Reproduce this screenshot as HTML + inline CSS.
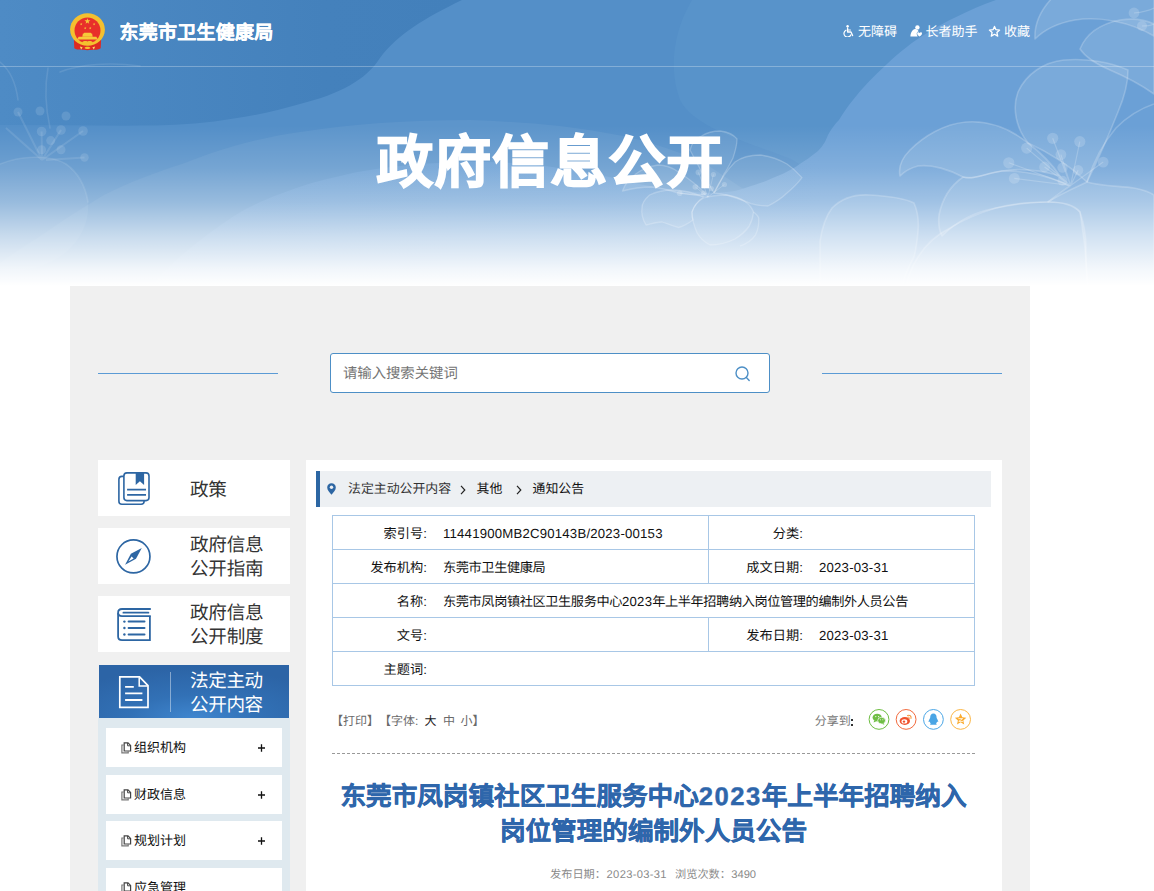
<!DOCTYPE html>
<html lang="zh-CN">
<head>
<meta charset="utf-8">
<title>东莞市卫生健康局 政府信息公开</title>
<style>
*{margin:0;padding:0;box-sizing:border-box;}
html,body{width:1154px;height:891px;overflow:hidden;background:#fff;}
body{font-family:"Liberation Sans",sans-serif;color:#000;position:relative;text-rendering:geometricPrecision;}
.abs{position:absolute;}
.nw{white-space:nowrap;}

/* ===== banner ===== */
#banner{position:absolute;left:0;top:0;width:1154px;height:286px;overflow:hidden;background:#5490c8;}
#banner svg{position:absolute;left:0;top:0;}
#hline{position:absolute;left:0;top:66px;width:1154px;height:1px;background:rgba(255,255,255,.28);}
#logo{position:absolute;left:70px;top:12.5px;width:35px;height:38px;}
#site{position:absolute;left:119.5px;top:21px;letter-spacing:0.25px;-webkit-text-stroke:0.3px #fff;font-size:19px;line-height:26px;font-weight:bold;color:#fff;}
.tl{position:absolute;top:22.5px;font-size:13px;line-height:18px;color:#fff;}
#big{position:absolute;left:2px;width:1097px;top:124px;text-align:center;font-size:56.5px;line-height:78px;font-weight:bold;color:#fff;letter-spacing:1.5px;-webkit-text-stroke:1.7px #fff;}

/* ===== grey container ===== */
#wrap{position:absolute;left:70px;top:286px;width:960px;height:605px;background:#f0f0f0;}
.sline{position:absolute;top:373px;height:1px;background:#5b9bd5;}
#search{position:absolute;left:330px;top:353px;width:440px;height:40px;background:#fff;border:1px solid #4d8fc6;border-radius:3px;}
#search span{position:absolute;left:12px;top:10.5px;font-size:14.4px;line-height:18px;color:#757575;letter-spacing:-0.05px;}
#search svg{position:absolute;left:403px;top:11px;}

/* ===== sidebar ===== */
.nav{position:absolute;left:98px;width:192px;height:56px;background:#fff;}
.nav .t{position:absolute;left:92px;font-size:18.6px;line-height:24.2px;color:#333;letter-spacing:-0.25px;}
.nav svg{position:absolute;}
#navon{position:absolute;left:98.5px;top:664.5px;width:190px;height:53.5px;background:radial-gradient(ellipse 75% 95% at 50% 100%,#3f86cf 0%,#3271b6 45%,#2c64a6 100%);}
#navon .t{position:absolute;left:91.5px;top:4px;font-size:18.6px;line-height:24.8px;color:#fff;letter-spacing:-0.4px;}
#subbg{position:absolute;left:98px;top:718px;width:192px;height:173px;background:#dfe9ef;}
.sub{position:absolute;left:106px;width:176px;height:39px;background:#fff;}
.sub .t{position:absolute;left:28px;top:11.2px;font-size:13px;line-height:18px;color:#111;}
.sub .p{position:absolute;left:152px;top:16px;width:7px;height:7px;}
.sub svg{position:absolute;left:15px;top:14px;}

/* ===== content ===== */
#main{position:absolute;left:306px;top:460px;width:696px;height:431px;background:#fff;}
#crumb{position:absolute;left:316px;top:471px;width:675px;height:36px;background:#edf0f3;border-left:4px solid #2c66a3;}
#crumb span{position:absolute;top:9px;font-size:12.9px;line-height:18px;color:#111;}
#crumb svg{position:absolute;}
#tbl{position:absolute;left:332px;top:514.5px;width:643px;height:171.7px;border:1px solid #a8c7e6;}
#tbl .h{position:absolute;left:0;width:641px;height:1px;background:#a8c7e6;}
#tbl .v{position:absolute;top:0;width:1px;background:#a8c7e6;}
.lab{position:absolute;font-size:13.2px;line-height:18px;color:#111;text-align:right;letter-spacing:0.05px;}
.val{position:absolute;font-size:13.2px;line-height:18px;color:#111;letter-spacing:-0.4px;}
.ls{letter-spacing:0.2px;}
.tool{position:absolute;top:712px;font-size:12px;line-height:18px;color:#6a6a6a;text-spacing-trim:space-all;}
#dash{position:absolute;left:332px;top:753px;width:643px;height:0;border-top:1px dashed #999;}
#title{position:absolute;left:322px;top:780px;width:663px;text-align:center;font-size:25.6px;line-height:34.5px;font-weight:bold;color:#2e66ab;-webkit-text-stroke:0.45px #2e66ab;}
.meta{position:absolute;top:865.5px;font-size:11.2px;line-height:18px;color:#8a8a8a;text-spacing-trim:space-all;}
</style>
</head>
<body>

<!-- BANNER -->
<div id="banner">
<svg width="1154" height="286" viewBox="0 0 1154 286">
<defs>
<linearGradient id="fade" x1="0" y1="0" x2="0" y2="1">
<stop offset="0" stop-color="#fff" stop-opacity="0"/>
<stop offset="0.44" stop-color="#fff" stop-opacity="0"/>
<stop offset="0.587" stop-color="#fff" stop-opacity="0.15"/>
<stop offset="0.706" stop-color="#fff" stop-opacity="0.36"/>
<stop offset="0.825" stop-color="#fff" stop-opacity="0.66"/>
<stop offset="0.94" stop-color="#fff" stop-opacity="0.91"/>
<stop offset="1" stop-color="#fff" stop-opacity="1"/>
</linearGradient>
<linearGradient id="lz" gradientUnits="userSpaceOnUse" x1="150" y1="0" x2="820" y2="0"><stop offset="0" stop-color="#6ba0d6" stop-opacity="0.5"/><stop offset="1" stop-color="#6ba0d6" stop-opacity="1"/></linearGradient>
<linearGradient id="dk" x1="0" y1="0" x2="1" y2="0">
<stop offset="0" stop-color="#4e8bc5"/>
<stop offset="0.7" stop-color="#4481bc"/>
<stop offset="1" stop-color="#4380bb"/>
</linearGradient>
</defs>
<rect width="1154" height="286" fill="#548fc8"/>
<!-- darker wave top-left -->
<path d="M0,0 H462 C425,18 398,34 380,58 C366,80 340,94 300,104 C280,110 258,115 234,118.5 C208,123 182,125 156,125.5 C104,126 52,125 0,125 Z" fill="url(#dk)"/>
<!-- medium zone -->
<path d="M692,0 C674,30 668,68 680,100 C694,128 748,142 791,159 L860,200 L1154,200 L1154,0 Z" fill="#5893ca"/>
<!-- lighter waves lower-left -->
<path d="M0,263 C12,254 26,245 39,237 C60,222 82,208 104,195 C130,182 156,172 182,164 C200,157 216,151 234,146 C256,140 278,135 300,132 C326,128 352,125 380,123 C410,121 440,120 470,120 C500,121 530,123 560,126 C590,130 616,134 640,140 C664,147 684,154 700,160 L760,200 L760,286 L0,286 Z" fill="#fff" fill-opacity="0.055"/>
<!-- light zone right -->
<path d="M996,0 H1154 V286 H150 C152,284 154,282 156,281 C164,272 172,263 182,255 C198,241 216,228 234,216 C250,206 266,199 280,194 C300,186 320,180 340,176 C360,171 380,168 400,166 C426,163 452,162 480,162 C506,162 534,164 559,168 C588,172 614,178 639,184 C654,187 668,189 679,190 C692,192 704,193 714,193 C724,192 730,192 735,191 C748,187 758,184 766,181 C780,175 790,171 797,166 C806,160 812,156 818,151 C824,145 826,140 828,135 C832,128 835,124 839,120 C844,112 848,106 853,100 C862,88 874,76 887,64 C900,52 912,42 927,33 C945,22 968,10 996,0 Z" fill="url(#lz)"/>
<!-- flowers right -->
<g fill="#fff" fill-opacity="0.105" stroke="#fff" stroke-opacity="0.2" stroke-width="1.6" stroke-linejoin="round">
<path d="M1035,39 C1034,22 1042,8 1054,-4 L1154,-4 L1154,36 C1130,22 1100,16 1075,20 C1058,23 1044,30 1035,39 Z"/>
<path d="M1080,49 C1086,34 1100,24 1120,20 C1134,18 1146,20 1154,24 L1154,94 C1140,84 1124,76 1110,70 C1096,64 1086,58 1080,49 Z"/>
<path d="M1028,143 C1016,128 1012,108 1018,92 C1026,74 1044,62 1064,60 C1086,58 1110,62 1128,70 C1128,84 1124,98 1118,112 C1110,132 1100,156 1087,182 C1070,166 1048,152 1028,143 Z"/>
<path d="M900,176 C898,166 902,158 910,150 C924,136 944,124 966,122 C990,120 1012,130 1028,143 C1040,152 1052,164 1060,176 C1040,170 1020,168 1002,171 C984,174 974,180 963,177 C950,170 932,164 918,166 C910,168 904,172 900,176 Z"/>
<path d="M963,177 C950,186 942,200 939,215 C938,224 940,232 942,236 C956,222 974,212 996,208 C1016,204 1034,202 1048,202 C1056,196 1064,190 1070,186 C1050,176 1024,170 1002,171 C986,173 974,180 963,177 Z"/>
<path d="M918,257 C926,244 938,234 950,228 C966,218 982,212 996,208 C1014,203 1032,202 1048,202 C1062,202 1074,206 1080,212 C1084,224 1086,236 1086,248 C1086,262 1086,276 1088,286 L906,286 C908,276 912,266 918,257 Z"/>
<path d="M820,241 C822,228 826,216 832,208 C842,198 856,194 870,195 C888,196 904,198 914,203 C918,212 919,222 918,232 C917,242 916,250 914,257 C908,268 904,278 903,286 L820,286 Z"/>
<path d="M1087,182 C1100,186 1120,186 1134,188 C1144,190 1150,192 1154,195 L1154,286 L1088,286 C1086,270 1086,254 1084,240 C1082,226 1080,212 1080,212 C1074,204 1062,202 1048,202 C1060,194 1074,188 1087,182 Z"/>
<path d="M1087,182 C1094,160 1104,142 1116,128 C1128,116 1142,108 1154,104" fill="none"/>
</g>
<g stroke="#fff" stroke-opacity="0.2" stroke-width="1.2" fill="none">
<path d="M1070.6,185.5 L1052.7,138.3 M1070.6,185.5 L1079.8,141.6 M1070.6,185.5 L1026.7,148.1 M1070.6,185.5 L1060.9,154.6 M1070.6,185.5 L1008.8,162.8 M1070.6,185.5 L1044.6,167 M1070.6,185.5 L1078.1,170.2 M1070.6,185.5 L1103.2,162.1 M1070.6,185.5 L1014.3,178.4 M1134,13 C1144,12 1150,10 1154,8 M1142,26 C1148,26 1152,25 1154,24"/>
</g>
<g fill="#fff" fill-opacity="0.17">
<circle cx="1052.7" cy="138.3" r="5.6"/><circle cx="1079.8" cy="141.6" r="5.6"/><circle cx="1026.7" cy="148.1" r="5.6"/><circle cx="1060.9" cy="154.6" r="5.4"/><circle cx="1008.8" cy="162.8" r="5.6"/><circle cx="1044.6" cy="167" r="5.4"/><circle cx="1062.5" cy="167.6" r="5.2"/><circle cx="1078.1" cy="170.2" r="5.2"/><circle cx="1103.2" cy="162.1" r="5.4"/><circle cx="1014.3" cy="178.4" r="5.4"/><circle cx="1062.5" cy="180.7" r="5"/><circle cx="1134" cy="13" r="5.4"/><circle cx="1142" cy="26" r="5"/>
</g>
<!-- small flower mid -->
<g fill="#fff" fill-opacity="0.085" stroke="#fff" stroke-opacity="0.22" stroke-width="1.3" stroke-linejoin="round">
<path d="M690,150 C692,142 696,138 701.5,136 C708,132 714,131 720,131 C728,132 734,135 737,139 C737,146 735,152 733,158 C730,164 727,170 724,174 C721,181 717,188 714,193 C706,180 698,166 690,150 Z"/>
<path d="M714,193 C720,180 727,170 735,162 C742,157 751,155 760,155 C770,156 780,160 787,164 C793,168 798,173 802,177.6 C798,183 793,188 787,193 C781,199 774,203 768,206 C762,206 756,205 751,203.6 C742,200 734,197 726.5,195 C722,194 718,193.5 714,193 Z"/>
<path d="M622.5,191 C625,184 630,178 635,174.5 C642,169 650,166 658,165 C666,165 673,168 678.6,172 C688,178 698,186 706,194 C698,196 688,194 678.6,193 C668,190 660,188 651.6,187 C640,187 630,189 622.5,191 Z"/>
<path d="M703.6,197 C692,192 682,190 672,190 C664,190 656,192 649.5,195 C645,199 642,203 642,207.8 C641,214 643,220 646,225 C651,224 657,222 662,222 C668,224 673,226 678.6,227.5 C684,226 689,223 693,220 C692,217 692,214 692,212 C694,206 698,201 703.6,197 Z"/>
<path d="M692,212 C694,205 698,201 703.6,198 C710,196 718,195 726.5,195 C734,196 740,198 745,201.5 C749,204 752,208 753.5,212 C753,218 751,223 749,226.5 C745,232 740,236 735,239 C727,243 718,245 710,245 C704,242 700,238 697,232.7 C694,226 692,219 692,212 Z"/>
<path d="M753.5,212 C756,214 758,216 758.7,218 C759,224 758,230 755.6,234.8 C752,240 746,244 740,246" fill="none"/>
</g>
<g fill="#fff" fill-opacity="0.2">
<circle cx="698.4" cy="172.4" r="2.8"/><circle cx="713.4" cy="174.5" r="2.6"/><circle cx="724.4" cy="184.5" r="2.6"/><circle cx="695.3" cy="187" r="2.8"/><circle cx="711.3" cy="188.6" r="2.6"/><circle cx="679.7" cy="193.2" r="2.8"/><circle cx="703.6" cy="193.2" r="2.6"/>
</g>
<g stroke="#fff" stroke-opacity="0.2" stroke-width="1" fill="none"><path d="M708,197 L698.4,172.4 M708,197 L713.4,174.5 M708,197 L724.4,184.5 M708,197 L695.3,187 M708,197 L679.7,193.2"/></g>
<!-- faint flower left -->
<g fill="none" stroke="#fff" stroke-opacity="0.10" stroke-width="1.6" stroke-linecap="round">
<path d="M0,164 C20,156 50,154 66,164 C80,174 86,190 88,202"/>
<path d="M48,68 C44,90 46,110 50,128"/>
<path d="M0,62 C10,70 16,84 18,100"/>
<path d="M60,72 C80,64 110,62 140,66"/>
</g>
<g fill="none" stroke="#fff" stroke-opacity="0.10" stroke-width="2">
<path d="M42,160 L18,112 M42,160 L41.6,131.5 M42,160 L61,130 M42,160 L83,131 M46,160 L84.5,157.5 M42,160 L6,128"/>
</g>
<g fill="#fff" fill-opacity="0.06">
<path d="M0,164 C20,156 50,154 66,164 C80,174 86,190 88,202 C90,226 76,250 50,262 C34,270 16,272 0,270 Z"/>
</g>
<g fill="#fff" fill-opacity="0.12">
<circle cx="18" cy="112" r="4.5"/><circle cx="40" cy="111" r="4.5"/><circle cx="66" cy="116" r="4.5"/><circle cx="41.6" cy="131.5" r="4.8"/><circle cx="61" cy="130" r="4.8"/><circle cx="83" cy="131" r="4.8"/><circle cx="50.7" cy="140.6" r="4.5"/><circle cx="41.6" cy="149.7" r="4.5"/><circle cx="61" cy="149.7" r="4.5"/><circle cx="84.5" cy="157.5" r="4.2"/>
</g>
<rect width="1154" height="286" fill="url(#fade)"/>
</svg>
<div id="hline"></div>
</div>

<svg id="logo" viewBox="0 0 35 38">
<path d="M3.9,27 L9,24 L26,24 L31.1,27 L30.7,35.2 C27,37.4 22,36.4 17.4,37.3 C13,36.4 8,37.4 4.3,35.2 Z" fill="#df2a22"/>
<ellipse cx="17.5" cy="16.5" rx="17.4" ry="16.3" fill="#f4c02f"/>
<circle cx="17.5" cy="17.4" r="13.0" fill="#e8302a"/>
<g fill="#f6c93a">
<polygon points="17.40,5.20 18.13,7.30 20.35,7.34 18.58,8.68 19.22,10.81 17.40,9.54 15.58,10.81 16.22,8.68 14.45,7.34 16.67,7.30"/><polygon points="11.20,9.70 11.53,10.65 12.53,10.67 11.73,11.27 12.02,12.23 11.20,11.66 10.38,12.23 10.67,11.27 9.87,10.67 10.87,10.65"/><polygon points="24.10,9.70 24.43,10.65 25.43,10.67 24.63,11.27 24.92,12.23 24.10,11.66 23.28,12.23 23.57,11.27 22.77,10.67 23.77,10.65"/><polygon points="15.20,13.70 15.53,14.65 16.53,14.67 15.73,15.27 16.02,16.23 15.20,15.66 14.38,16.23 14.67,15.27 13.87,14.67 14.87,14.65"/><polygon points="20.20,13.70 20.53,14.65 21.53,14.67 20.73,15.27 21.02,16.23 20.20,15.66 19.38,16.23 19.67,15.27 18.87,14.67 19.87,14.65"/>
<path d="M12.3,23.8 L12.9,20.6 L13.8,20.6 L14.2,19.7 L20.8,19.7 L21.2,20.6 L22.1,20.6 L22.7,23.8 Z"/>
<path d="M7.2,26.5 L8.6,23.8 L26.4,23.8 L27.8,26.5 Z"/>
</g>
<path d="M12,29.6 C13.4,27.8 15.6,27.8 17.5,28.4 C19.4,27.8 21.6,27.8 23,29.6 C21.4,31 19.4,31.4 17.5,31.4 C15.6,31.4 13.6,31 12,29.6 Z" fill="#f4c02f"/>
<path d="M14.6,34.9 C15.6,33.5 19.4,33.5 20.4,34.9 C19.4,36.2 15.6,36.2 14.6,34.9 Z" fill="#f4c02f"/>
<path d="M9.8,33.6 L12.6,34.3 L11.2,36.6 Z M25.2,33.6 L22.4,34.3 L23.8,36.6 Z" fill="#f8dc6a"/>
</svg>
<div id="site" class="nw">东莞市卫生健康局</div>
<svg class="abs" style="left:843px;top:25px;" width="12" height="12" viewBox="0 0 12 12"><circle cx="4.6" cy="1.3" r="1.2" fill="#fff"/><path d="M4.6,3 V7 H8 L9.6,10.6" fill="none" stroke="#fff" stroke-width="1.3" stroke-linecap="round" stroke-linejoin="round"/><path d="M4.6,5 H7.4" stroke="#fff" stroke-width="1.2" stroke-linecap="round"/><path d="M3,5.2 A3.6,3.6 0 1 0 7.9,9.8" fill="none" stroke="#fff" stroke-width="1.2" stroke-linecap="round"/></svg>
<svg class="abs" style="left:909.5px;top:25px;" width="13" height="12" viewBox="0 0 13 12"><circle cx="7.4" cy="2.4" r="2.2" fill="#fff"/><path d="M0.4,11.4 C0.6,7.4 2.4,4.6 5.2,4 C7,4.2 8.2,5 8.6,6.2 C7.2,6.6 6.4,7.8 6.8,9.4 L7.6,11.4 Z" fill="#fff"/><path d="M9.6,11.6 C8,10.4 7.2,9.4 7.2,8.4 C7.2,7.4 8.6,6.8 9.6,8 C10.6,6.8 12,7.4 12,8.4 C12,9.4 11.2,10.4 9.6,11.6 Z" fill="#fff"/></svg>
<svg class="abs" style="left:987.5px;top:24.5px;" width="13" height="13" viewBox="0 0 13 13"><path d="M6.5,1.4 L8,4.7 L11.6,5.1 L8.9,7.5 L9.7,11.1 L6.5,9.3 L3.3,11.1 L4.1,7.5 L1.4,5.1 L5,4.7 Z" fill="none" stroke="#fff" stroke-width="1.3" stroke-linejoin="round"/></svg>
<div class="tl nw" style="left:858px;">无障碍</div>
<div class="tl nw" style="left:925.5px;">长者助手</div>
<div class="tl nw" style="left:1004px;">收藏</div>
<div id="big" class="nw">政府信息公开</div>

<!-- GREY WRAP -->
<div id="wrap"></div>
<div class="sline" style="left:98px;width:180px;"></div>
<div class="sline" style="left:822px;width:180px;"></div>
<div id="search"><span class="nw">请输入搜索关键词</span>
<svg width="18" height="18" viewBox="0 0 18 18"><circle cx="8" cy="8" r="6" fill="none" stroke="#4d8fc6" stroke-width="1.4"/><path d="M12.4,12.6 L15.2,15.6" stroke="#4d8fc6" stroke-width="1.4" stroke-linecap="round"/></svg>
</div>

<!-- SIDEBAR -->
<div class="nav" style="top:460px;"><svg width="60" height="56" viewBox="0 0 60 56" style="left:0;top:0;"><rect x="20.9" y="16.4" width="25.2" height="27.8" rx="3" fill="none" stroke="#2d66a3" stroke-width="1.6"/><rect x="25.9" y="12.9" width="25.1" height="27.7" rx="3" fill="#fff" stroke="#2d66a3" stroke-width="1.6"/><path d="M37.7,12.9 H46.1 V24.9 L41.9,21.2 L37.7,24.9 Z" fill="#2d66a3"/><path d="M29.1,29.7 H48 M29.1,34.9 H48" stroke="#2d66a3" stroke-width="1.7"/></svg><div class="t nw" style="top:17.5px;">政策</div></div>
<div class="nav" style="top:528px;"><svg width="60" height="56" viewBox="0 0 60 56" style="left:0;top:0;"><circle cx="35.45" cy="28.4" r="16.5" fill="none" stroke="#2d66a3" stroke-width="1.7"/><path d="M43.8,19.9 L38,30.7 L27.1,36.7 L32.9,25.8 Z" fill="#2d66a3"/><path d="M33.6,28.6 L35.6,30.6 L30.4,33.6 Z" fill="#fff"/></svg><div class="t nw" style="top:4.5px;">政府信息<br>公开指南</div></div>
<div class="nav" style="top:596px;"><svg width="60" height="56" viewBox="0 0 60 56" style="left:0;top:0;"><path d="M52.8,13 H24 C18.8,13 18.8,20.2 24,20.2 H52.8" fill="none" stroke="#2d66a3" stroke-width="1.8"/><path d="M25.4,16.7 H50.4" stroke="#2d66a3" stroke-width="1.8" stroke-linecap="round"/><path d="M20.1,17 V40.6 C20.1,42.8 21.8,44.2 24,44.2 H51.9 V20.2" fill="none" stroke="#2d66a3" stroke-width="1.8"/><path d="M30.6,25.6 H46.5 M30.6,32 H46.5 M30.6,38.5 H46.5" stroke="#2d66a3" stroke-width="2" stroke-linecap="round"/><circle cx="26.4" cy="25.6" r="1.2" fill="#2d66a3"/><circle cx="26.4" cy="32" r="1.2" fill="#2d66a3"/><circle cx="26.4" cy="38.5" r="1.2" fill="#2d66a3"/></svg><div class="t nw" style="top:4.5px;">政府信息<br>公开制度</div></div>
<div id="navon"><svg class="abs" width="60" height="54" viewBox="0 0 60 54" style="left:0;top:0;"><path d="M20.8,11.9 H40.6 L49,20.6 V42.4 H20.8 Z" fill="none" stroke="#fff" stroke-width="1.7" stroke-linejoin="miter"/><path d="M40.2,12.2 V21 H48.8" fill="none" stroke="#fff" stroke-width="1.5"/><path d="M26.1,21.8 H34.8 M26.1,28.4 H43.4 M26.1,35 H43.4" stroke="#fff" stroke-width="1.8"/></svg><div class="abs" style="left:71.5px;top:7px;width:1px;height:40px;background:rgba(255,255,255,.42);"></div><div class="t nw">法定主动<br>公开内容</div></div>
<div id="subbg"></div>
<div class="sub" style="top:728px;"><svg width="11" height="12" viewBox="0 0 11 12"><path d="M2.6,3 H0.9 V10.9 H7.2 V9.6" fill="none" stroke="#777" stroke-width="1.2"/><path d="M3.2,0.8 H7 L9.6,3.4 V9 H3.2 Z" fill="none" stroke="#444" stroke-width="1.2"/><path d="M6.6,1 V3.8 H9.4" fill="none" stroke="#444" stroke-width="1"/></svg><div class="t nw">组织机构</div><div class="p"><svg width="7" height="8" viewBox="0 0 7 8" style="left:0;top:0;"><path d="M0,4 H7 M3.5,0.3 V7.7" stroke="#111" stroke-width="1.3"/></svg></div></div>
<div class="sub" style="top:774.7px;"><svg width="11" height="12" viewBox="0 0 11 12"><path d="M2.6,3 H0.9 V10.9 H7.2 V9.6" fill="none" stroke="#777" stroke-width="1.2"/><path d="M3.2,0.8 H7 L9.6,3.4 V9 H3.2 Z" fill="none" stroke="#444" stroke-width="1.2"/><path d="M6.6,1 V3.8 H9.4" fill="none" stroke="#444" stroke-width="1"/></svg><div class="t nw">财政信息</div><div class="p"><svg width="7" height="8" viewBox="0 0 7 8" style="left:0;top:0;"><path d="M0,4 H7 M3.5,0.3 V7.7" stroke="#111" stroke-width="1.3"/></svg></div></div>
<div class="sub" style="top:821.2px;"><svg width="11" height="12" viewBox="0 0 11 12"><path d="M2.6,3 H0.9 V10.9 H7.2 V9.6" fill="none" stroke="#777" stroke-width="1.2"/><path d="M3.2,0.8 H7 L9.6,3.4 V9 H3.2 Z" fill="none" stroke="#444" stroke-width="1.2"/><path d="M6.6,1 V3.8 H9.4" fill="none" stroke="#444" stroke-width="1"/></svg><div class="t nw">规划计划</div><div class="p"><svg width="7" height="8" viewBox="0 0 7 8" style="left:0;top:0;"><path d="M0,4 H7 M3.5,0.3 V7.7" stroke="#111" stroke-width="1.3"/></svg></div></div>
<div class="sub" style="top:868px;"><svg width="11" height="12" viewBox="0 0 11 12"><path d="M2.6,3 H0.9 V10.9 H7.2 V9.6" fill="none" stroke="#777" stroke-width="1.2"/><path d="M3.2,0.8 H7 L9.6,3.4 V9 H3.2 Z" fill="none" stroke="#444" stroke-width="1.2"/><path d="M6.6,1 V3.8 H9.4" fill="none" stroke="#444" stroke-width="1"/></svg><div class="t nw">应急管理</div></div>

<!-- MAIN -->
<div id="main"></div>
<div id="crumb">
<svg style="left:7px;top:12px;" width="9" height="12" viewBox="0 0 9 12"><path d="M4.5,0.2 C2,0.2 0.2,2 0.2,4.4 C0.2,7 2.6,9.4 4.5,11.8 C6.4,9.4 8.8,7 8.8,4.4 C8.8,2 7,0.2 4.5,0.2 Z" fill="#2d66a3"/><circle cx="4.5" cy="4.3" r="1.7" fill="#eef0f3"/></svg>
<span class="nw" style="left:28px;color:#333;">法定主动公开内容</span>
<svg style="left:140px;top:13.5px;" width="6" height="10" viewBox="0 0 6 10"><path d="M1,0.8 L4.8,5 L1,9.2" fill="none" stroke="#222" stroke-width="1.2"/></svg>
<span class="nw" style="left:156.5px;">其他</span>
<svg style="left:195.5px;top:13.5px;" width="6" height="10" viewBox="0 0 6 10"><path d="M1,0.8 L4.8,5 L1,9.2" fill="none" stroke="#222" stroke-width="1.2"/></svg>
<span class="nw" style="left:212.5px;">通知公告</span>
</div>
<div id="tbl">
<div class="h" style="top:33.2px;"></div>
<div class="h" style="top:67.4px;"></div>
<div class="h" style="top:101.5px;"></div>
<div class="h" style="top:135.7px;"></div>
<div class="v" style="left:375px;height:67px;"></div>
<div class="v" style="left:375px;top:101px;height:34px;"></div>
</div>
<div class="lab nw" style="left:332px;width:95px;top:524.6px;">索引号:</div>
<div class="val nw" style="left:443px;top:524.6px;"><span class="ls">11441900MB2C90143B/2023-00153</span></div>
<div class="lab nw" style="left:708px;width:95px;top:524.6px;">分类:</div>
<div class="lab nw" style="left:332px;width:95px;top:558.6px;">发布机构:</div>
<div class="val nw" style="left:443px;top:558.6px;">东莞市卫生健康局</div>
<div class="lab nw" style="left:708px;width:95px;top:558.6px;">成文日期:</div>
<div class="val nw" style="left:819px;top:558.6px;"><span class="ls">2023-03-31</span></div>
<div class="lab nw" style="left:332px;width:95px;top:592.6px;">名称:</div>
<div class="val nw" style="left:443px;top:592.6px;">东莞市凤岗镇社区卫生服务中心<span class="ls">2023</span>年上半年招聘纳入岗位管理的编制外人员公告</div>
<div class="lab nw" style="left:332px;width:95px;top:626.6px;">文号:</div>
<div class="lab nw" style="left:708px;width:95px;top:626.6px;">发布日期:</div>
<div class="val nw" style="left:819px;top:626.6px;"><span class="ls">2023-03-31</span></div>
<div class="lab nw" style="left:332px;width:95px;top:660.6px;">主题词:</div>

<div class="tool nw" style="left:331px;">【打印】</div>
<div class="tool nw" style="left:379px;">【字体:</div>
<div class="tool nw" style="left:424.5px;color:#222;">大</div>
<div class="tool nw" style="left:443px;">中</div>
<div class="tool nw" style="left:460.6px;">小</div>
<div class="tool nw" style="left:472.6px;">】</div>
<div class="tool nw" style="left:814.8px;color:#777;">分享到</div>
<div class="abs" style="left:850.7px;top:718.6px;width:2px;height:2px;background:#333;"></div><div class="abs" style="left:850.7px;top:723.8px;width:2px;height:2px;background:#333;"></div>
<svg class="abs" style="left:867px;top:707px;" width="106" height="25" viewBox="0 0 106 25">
<circle cx="12" cy="12.4" r="9.9" fill="#fff" stroke="#6fbe44" stroke-width="1"/>
<ellipse cx="10.2" cy="10.6" rx="4.6" ry="3.9" fill="#6fbe44"/><path d="M7.2,13.2 L6.6,15.6 L9.4,14.2 Z" fill="#6fbe44"/>
<ellipse cx="14.6" cy="13.6" rx="3.9" ry="3.3" fill="#6fbe44" stroke="#fff" stroke-width="0.7"/><path d="M16.4,16 L17.4,17.8 L14.8,16.8 Z" fill="#6fbe44"/>
<circle cx="8.8" cy="9.6" r="0.6" fill="#fff"/><circle cx="11.6" cy="9.6" r="0.6" fill="#fff"/><circle cx="13.4" cy="12.8" r="0.5" fill="#fff"/><circle cx="15.8" cy="12.8" r="0.5" fill="#fff"/>
<circle cx="39.1" cy="12.4" r="9.9" fill="#fff" stroke="#f26a3d" stroke-width="1"/>
<ellipse cx="37.8" cy="14" rx="5.2" ry="3.9" fill="#f0522d"/><ellipse cx="37.4" cy="14.4" rx="2.9" ry="2.2" fill="#fff"/><circle cx="37" cy="14.6" r="1.2" fill="#f0522d"/>
<path d="M40.6,8.6 C42.6,7.6 44.6,9.2 44,11.4" fill="none" stroke="#f7943a" stroke-width="1.1" stroke-linecap="round"/><path d="M40.8,10.2 C41.8,9.8 42.8,10.4 42.4,11.4" fill="none" stroke="#f7943a" stroke-width="0.9" stroke-linecap="round"/>
<circle cx="66.4" cy="12.4" r="9.9" fill="#fff" stroke="#4aa6e6" stroke-width="1"/>
<path d="M66.4,6.6 C64.2,6.6 63.2,8.4 63.2,10.4 C63.2,11.2 62,12.6 61.6,14.2 C61.4,15.2 62,15.4 62.6,14.6 C62.8,15.4 63.2,16 63.8,16.6 C63,16.9 62.8,17.6 63.6,17.8 L66.4,17.8 L69.2,17.8 C70,17.6 69.8,16.9 69,16.6 C69.6,16 70,15.4 70.2,14.6 C70.8,15.4 71.4,15.2 71.2,14.2 C70.8,12.6 69.6,11.2 69.6,10.4 C69.6,8.4 68.6,6.6 66.4,6.6 Z" fill="#49a5e5"/>
<circle cx="93.6" cy="12.4" r="9.9" fill="#fff" stroke="#fbb543" stroke-width="1"/>
<path d="M93.6,6.6 L95.3,10.3 L99.3,10.7 L96.3,13.4 L97.2,17.4 L93.6,15.3 L90,17.4 L90.9,13.4 L87.9,10.7 L91.9,10.3 Z" fill="#fbab2e"/><path d="M91.4,11.6 H95.6 L91.8,14.4 H96" fill="none" stroke="#fff" stroke-width="0.8"/>
</svg>
<div id="dash"></div>
<div id="title" class="nw">东莞市凤岗镇社区卫生服务中心<span style="letter-spacing:1.5px;">2023</span>年上半年招聘纳入<br>岗位管理的编制外人员公告</div>
<div class="meta nw" style="left:550px;">发布日期：</div><div class="meta nw" style="left:606.6px;letter-spacing:0.3px;">2023-03-31</div><div class="meta nw" style="left:675px;">浏览次数：</div><div class="meta nw" style="left:731.2px;">3490</div>

</body>
</html>
